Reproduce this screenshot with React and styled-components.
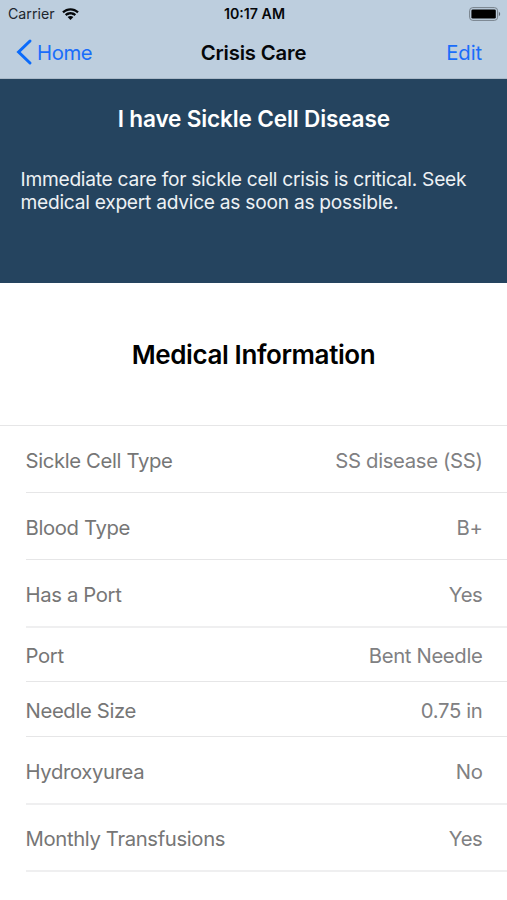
import React from "react";
import styled, { createGlobalStyle } from "styled-components";

const Global = createGlobalStyle`
  * { box-sizing: border-box; }
  body { margin: 0; background: #fff; font-family: Inter, "Liberation Sans", sans-serif; }
`;

const Screen = styled.main`
  width: 507px;
  height: 900px;
  display: flex;
  flex-direction: column;
  overflow: hidden;
  background: #fff;
`;

const TopBar = styled.header`
  height: 79px;
  flex: none;
  background: #bdcede;
  border-bottom: 1px solid #a9b9c8;
`;

const StatusBar = styled.div`
  height: 27px;
  display: grid;
  grid-template-columns: minmax(0, 1fr) auto minmax(0, 1fr);
  align-items: center;
  padding: 0 6px 0 8px;
`;

const Carrier = styled.div`
  display: flex;
  align-items: center;
  gap: 7px;
`;

const BatterySlot = styled.div`
  display: flex;
  justify-content: flex-end;
`;

const NavBar = styled.nav`
  height: 50px;
  display: grid;
  grid-template-columns: minmax(0, 1fr) auto minmax(0, 1fr);
  align-items: center;
  padding: 0 16px;
`;

const NavButton = styled.button`
  display: flex;
  align-items: center;
  gap: 4px;
  justify-self: ${(p) => p.$side};
  padding: 0 ${(p) => (p.$side === "end" ? 9 : 0)}px 0 0;
  border: 0;
  background: none;
  font-family: inherit;
`;

const Banner = styled.section`
  height: 204px;
  flex: none;
  padding: 25px 20px 0 20.5px;
  background: #25445f;
`;

const BannerTitle = styled.h1`
  margin: 0;
  padding: 3px 0 38px;
  display: flex;
  justify-content: center;
`;

const BannerText = styled.p`
  margin: 0;
`;

const SectionHead = styled.h2`
  margin: 0;
  height: 143px;
  flex: none;
  display: flex;
  align-items: center;
  justify-content: center;
  border-bottom: 1px solid #e6e6e7;
`;

const Rows = styled.dl`
  margin: 0;
  padding-left: 25.5px;
`;

const Row = styled.div`
  height: ${(p) => p.$height}px;
  display: flex;
  align-items: center;
  justify-content: space-between;
  padding: 2px 24.5px 0 0;
  border-bottom: ${(p) => (p.$thick ? "2px solid #efeff0" : "1px solid #e6e6e7")};
`;

const Term = styled.dt``;

const Value = styled.dd`
  margin: 0;
`;

const Label = styled.span`
  display: block;
  white-space: nowrap;
  font-size: ${(p) => p.$size}px;
  font-weight: ${(p) => p.$weight || 400};
  letter-spacing: ${(p) => p.$track || 0}px;
  color: ${(p) => p.$color};
  line-height: 23px;
`;

const rows = [
  { term: "Sickle Cell Type", value: "SS disease (SS)", height: 67 },
  { term: "Blood Type", value: "B+", height: 67 },
  { term: "Has a Port", value: "Yes", height: 68, thick: true },
  { term: "Port", value: "Bent Needle", height: 54 },
  { term: "Needle Size", value: "0.75 in", height: 55 },
  { term: "Hydroxyurea", value: "No", height: 68, thick: true },
  { term: "Monthly Transfusions", value: "Yes", height: 67, thick: true },
];

function Wifi() {
  return (
    <svg width="17" height="12" viewBox="0 0 17 12" fill="#05070a">
      <path d="M.2 3.6C4.9-1 12.1-1 16.8 3.6L15.2 5.2C11.4 1.5 5.6 1.5 1.8 5.2Z" />
      <path d="M2.9 6.3C6.1 3.3 10.9 3.3 14.1 6.3L12.4 8C10.2 6 6.8 6 4.6 8Z" />
      <path d="M8.5 11.9 5.6 9c1.7-1.4 4.1-1.4 5.8 0Z" />
    </svg>
  );
}

function Battery() {
  return (
    <svg width="32" height="14" viewBox="0 0 32 14">
      <rect x=".6" y=".6" width="28" height="12.8" rx="3.2" fill="none" stroke="#77818b" />
      <rect x="2.4" y="2.4" width="24.4" height="9.2" rx="1.4" fill="#000" />
      <path d="M29.9 4.8c1.7.8 1.7 3.6 0 4.4Z" fill="#606a75" />
    </svg>
  );
}

function Chevron() {
  return (
    <svg width="17" height="28" viewBox="0 0 17 28" fill="none" stroke="#0b6bfb" strokeWidth="3" strokeLinecap="round">
      <path d="M14 3 2.6 14 14 25" />
    </svg>
  );
}

export default function App() {
  return (
    <Screen>
      <Global />
      <TopBar>
        <StatusBar>
          <Carrier>
            <Label $size={14.2} $color="#20262d">Carrier</Label>
            <Wifi />
          </Carrier>
          <Label $size={14.2} $weight={600} $color="#05070a">10:17 AM</Label>
          <BatterySlot><Battery /></BatterySlot>
        </StatusBar>
        <NavBar>
          <NavButton $side="start">
            <Chevron />
            <Label $size={20.3} $track={-0.4} $color="#1a6dfa">Home</Label>
          </NavButton>
          <Label $size={20.3} $weight={600} $track={-0.15} $color="#05070a">Crisis Care</Label>
          <NavButton $side="end">
            <Label $size={20.3} $track={-0.1} $color="#1a6dfa">Edit</Label>
          </NavButton>
        </NavBar>
      </TopBar>
      <Banner>
        <BannerTitle>
          <Label $size={22.6} $weight={600} $track={-0.16} $color="#fff">I have Sickle Cell Disease</Label>
        </BannerTitle>
        <BannerText>
          <Label $size={19.2} $track={-0.27} $color="#edf1f4">Immediate care for sickle cell crisis is critical. Seek</Label>
          <Label $size={19.2} $track={-0.27} $color="#edf1f4">medical expert advice as soon as possible.</Label>
        </BannerText>
      </Banner>
      <SectionHead>
        <Label $size={26} $weight={600} $track={-0.4} $color="#000">Medical Information</Label>
      </SectionHead>
      <Rows>
        {rows.map(({ term, value, height, thick }) => (
          <Row key={term} $height={height} $thick={thick}>
            <Term><Label $size={20.3} $track={-0.36} $color="#767676">{term}</Label></Term>
            <Value><Label $size={20.3} $track={-0.34} $color="#808082">{value}</Label></Value>
          </Row>
        ))}
      </Rows>
    </Screen>
  );
}
